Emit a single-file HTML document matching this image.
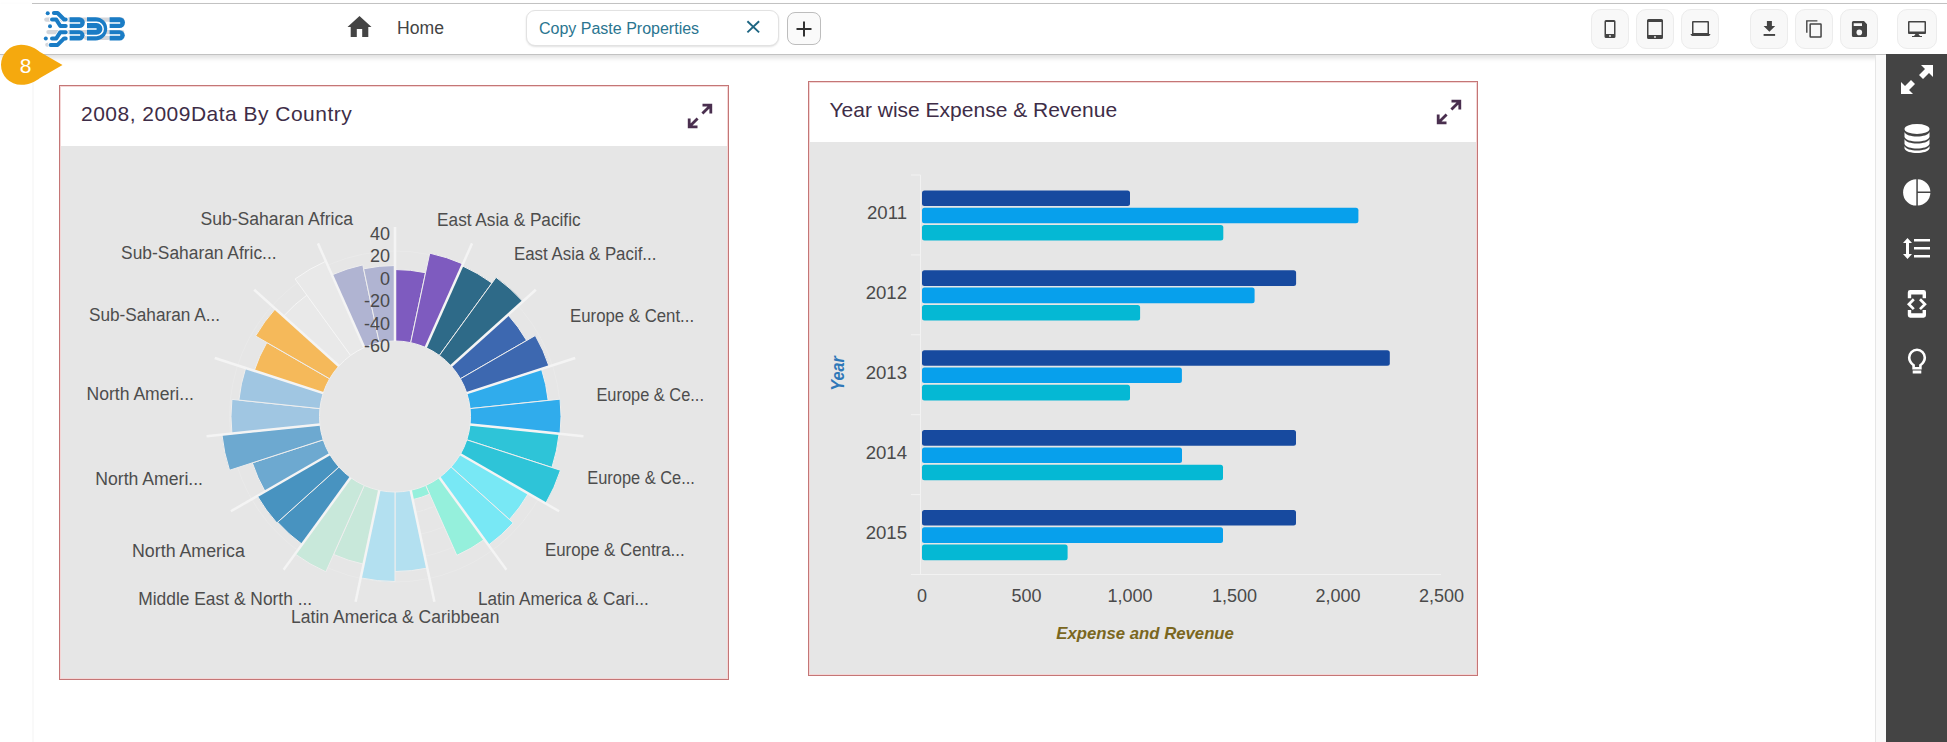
<!DOCTYPE html>
<html><head><meta charset="utf-8">
<style>
*{margin:0;padding:0;box-sizing:border-box}
html,body{width:1947px;height:742px;overflow:hidden;background:#fff;font-family:"Liberation Sans",sans-serif}
.abs{position:absolute}
#topline{left:32px;top:3px;width:1915px;height:1px;background:#c4c4c4}
#header{left:0;top:4px;width:1947px;height:51px;background:#fff;border-bottom:1px solid #c2c2c2;box-shadow:0 3px 5px rgba(0,0,0,0.13)}
#leftline{left:32px;top:55px;width:2px;height:700px;background:#f9f9f9}
#rstrip{left:1875px;top:55px;width:11px;height:700px;background:#fafafa;border-left:1px solid #e6e6e6}
#sidebar{left:1886px;top:54px;width:61px;height:700px;background:#444444}
.btn{top:9px;width:38px;height:40px;border-radius:10px;background:#f8f8f8;border:1px solid #ececec}
.btn svg{position:absolute}
.card{width:670px;height:595px;border:1px solid #c47676;background:#e6e6e6;box-shadow:inset 0 0 0 1px #f4d6d6}
.card .hd{position:absolute;left:1px;top:1px;width:666px;height:59px;background:#fff}
.ttl{position:absolute;color:#3e2d47;font-size:21px;white-space:nowrap}
svg text{font-family:"Liberation Sans",sans-serif}
.pl{font-size:17.6px;fill:#4d4d4d}
.ax{font-size:18px;fill:#4a4a4a}
.yl{font-size:18.6px;fill:#4a4a4a}
.xl{font-size:18px;fill:#4a4a4a}
.xt{font-size:16.7px;font-weight:bold;font-style:italic;fill:#7a6620}
.yt{font-size:17.5px;font-style:italic;font-weight:bold;fill:#2f78b8}
</style></head><body>
<div id="topline" class="abs"></div>
<div id="header" class="abs"></div>
<div id="leftline" class="abs"></div>
<div id="rstrip" class="abs"></div>
<div id="sidebar" class="abs"></div>

<!-- logo -->
<svg class="abs" style="left:40px;top:8px" width="90" height="42" viewBox="40 8 90 42">
 <g fill="#d3d6db">
  <rect x="44.2" y="17.4" width="80" height="4.4" rx="2.2"/>
  <rect x="46.3" y="30" width="78" height="4.2" rx="2.1"/>
  <rect x="84" y="35.8" width="26" height="4.2" rx="2"/>
  <rect x="45.2" y="42.7" width="8" height="4.1" rx="2"/>
 </g>
 <g fill="none" stroke-linecap="round" stroke-linejoin="round">
  <g stroke="#fff" stroke-width="5.6">
   <path d="M53.9,13H57.6L64.1,19.5H65.7"/>
  </g>
  <path d="M53.9,13H57.6L64.1,19.5H65.7" stroke="#1a7cc5" stroke-width="4"/>
  <path d="M52,19.6H56.3L60.3,26H65.7" stroke="#fff" stroke-width="5.6"/>
  <path d="M52,19.6H56.3L60.3,26H65.7" stroke="#1a7cc5" stroke-width="4"/>
  <path d="M65.7,32.2H60.3L56.3,38.4H52" stroke="#fff" stroke-width="5.6"/>
  <path d="M65.7,32.2H60.3L56.3,38.4H52" stroke="#1a7cc5" stroke-width="4"/>
  <path d="M65.7,38.4H64.1L57.6,44.9H50.6" stroke="#fff" stroke-width="5.6"/>
  <path d="M65.7,38.4H64.1L57.6,44.9H50.6" stroke="#1a7cc5" stroke-width="4"/>
 </g>
 <g fill="#1a7cc5">
  <circle cx="47.7" cy="13.3" r="2"/><circle cx="50" cy="26.3" r="2"/><circle cx="45.8" cy="38.4" r="2"/>
  <path d="M69.6,17.2H79.4A5.4,5.4 0 0 1 79.4,28H69.6Z"/>
  <path d="M69.6,30.2H79.4A5.15,5.15 0 0 1 79.4,40.5H69.6Z"/>
  <path d="M87,17.2H95.55A11.65,11.65 0 0 1 95.55,40.5H87Z"/>
  <path d="M109.6,17.2H119.6A5.4,5.4 0 0 1 119.6,28H109.6Z"/>
  <path d="M109.6,30.2H119.6A5.15,5.15 0 0 1 119.6,40.5H109.6Z"/>
 </g>
 <g fill="none" stroke="#fff" stroke-width="1.5">
  <path d="M69,22.9H80.2M69,35H80.2M109,22.9H120.2M109,35H120.2M86.5,28.9H96.6"/>
  <path d="M86.5,22.3H96.6A6.6,6.6 0 0 1 96.6,35.5H86.5"/>
 </g>
</svg>

<!-- home -->
<svg class="abs" style="left:346px;top:15px" width="27" height="23" viewBox="0 0 27 23">
 <path d="M13.5,1 L25.5,12 L22.3,12 L22.3,22 L16.2,22 L16.2,14 L10.8,14 L10.8,22 L4.7,22 L4.7,12 L1.5,12 Z" fill="#444"/>
</svg>
<div class="abs" style="left:397px;top:17.5px;font-size:17.6px;color:#444">Home</div>

<!-- tab -->
<div class="abs" style="left:526px;top:10px;width:253px;height:36px;border:1px solid #e2e2e2;border-radius:9px;background:#fff;box-shadow:0 1px 2px rgba(0,0,0,0.12)"></div>
<div class="abs" style="left:539px;top:19.5px;font-size:16px;color:#2a7590">Copy Paste Properties</div>
<svg class="abs" style="left:746px;top:20px" width="14" height="14" viewBox="0 0 14 14">
 <path d="M1.4,1.2L13.1,12.4M13.1,1.2L1.4,12.4" stroke="#1d6582" stroke-width="1.9"/>
</svg>
<div class="abs" style="left:787px;top:12px;width:34px;height:33px;border:1px solid #bdbdbd;border-radius:8px;background:#fafafa"></div>
<svg class="abs" style="left:795.5px;top:21px" width="16" height="16" viewBox="0 0 16 16">
 <path d="M0.5,8H15.5M8,0.5V15.5" stroke="#333" stroke-width="2"/>
</svg>

<!-- right buttons -->
<div class="abs btn" style="left:1591px"></div>
<div class="abs btn" style="left:1636px"></div>
<div class="abs btn" style="left:1681px"></div>
<div class="abs btn" style="left:1750px"></div>
<div class="abs btn" style="left:1795px"></div>
<div class="abs btn" style="left:1840px"></div>
<div class="abs btn" style="left:1897px;width:40px"></div>
<svg class="abs" style="left:0;top:0" width="1947" height="60" viewBox="0 0 1947 60">
 <g fill="#444">
  <!-- phone -->
  <path d="M1606,20h8a1.5,1.5 0 0 1 1.5,1.5v15a1.5,1.5 0 0 1 -1.5,1.5h-8a1.5,1.5 0 0 1 -1.5,-1.5v-15a1.5,1.5 0 0 1 1.5,-1.5zM1606,22v12h8v-12z"/>
  <circle cx="1610" cy="36" r="0.9" fill="#f8f8f8"/>
  <!-- tablet -->
  <path d="M1648.5,19h13a1.5,1.5 0 0 1 1.5,1.5v17a1.5,1.5 0 0 1 -1.5,1.5h-13a1.5,1.5 0 0 1 -1.5,-1.5v-17a1.5,1.5 0 0 1 1.5,-1.5zM1648.5,22v13h13v-13z"/>
  <circle cx="1655" cy="37" r="0.9" fill="#f8f8f8"/>
  <!-- laptop -->
  <path d="M1693,21h15a1,1 0 0 1 1,1v12h-17v-12a1,1 0 0 1 1,-1zM1693.5,22.5v10.5h14v-10.5z"/>
  <path d="M1690.3,34h20.3l-1.5,2h-17.3z"/>
  <!-- download -->
  <path d="M1766.9,20.9h5v5h3.3l-5.8,5.9l-5.8,-5.9h3.3z"/>
  <rect x="1763.6" y="34" width="11.5" height="1.9" />
  <!-- copy -->
  <path d="M1806.1,20.3h11.3v1.3h-9.9v11.1h-1.4z"/>
  <path d="M1810.6,23.2h10a1.2,1.2 0 0 1 1.2,1.2v12.1a1.2,1.2 0 0 1 -1.2,1.2h-10a1.2,1.2 0 0 1 -1.2,-1.2v-12.1a1.2,1.2 0 0 1 1.2,-1.2zM1810.9,24.7v11.5h9.4v-11.5z"/>
  <!-- save -->
  <path d="M1853.4,20.9h10.6l3,3.3v11.2a1.5,1.5 0 0 1 -1.5,1.5h-12.1a1.5,1.5 0 0 1 -1.5,-1.5v-13a1.5,1.5 0 0 1 1.5,-1.5zM1853.7,23.3v2.6h8.3v-2.6z"/>
  <circle cx="1859.3" cy="32.4" r="2.8" fill="#f8f8f8"/>
  <!-- desktop -->
  <path d="M1909,21h16a1,1 0 0 1 1,1v11a1,1 0 0 1 -1,1h-16a1,1 0 0 1 -1,-1v-11a1,1 0 0 1 1,-1zM1909.5,22.5v9h15v-9z"/>
  <path d="M1915.5,34h3l1.5,2h2v1h-10v-1h2z"/>
 </g>
</svg>

<!-- sidebar icons -->
<svg class="abs" style="left:1886px;top:54px" width="61" height="340" viewBox="1886 54 61 340">
 <g fill="#fff">
  <!-- expand -->
  <path d="M1921,65h12v12l-4,-4l-6,6l-4,-4l6,-6z"/>
  <path d="M1913,94h-12v-12l4,4l6,-6l4,4l-6,6z"/>
  <!-- database -->
  <ellipse cx="1917" cy="129" rx="12.5" ry="5"/>
  <path d="M1904.5,132c2,6 23,6 25,0v5c-2,6 -23,6 -25,0z"/>
  <path d="M1904.5,139c2,6 23,6 25,0v5c-2,6 -23,6 -25,0z"/>
  <path d="M1904.5,146c2,6 23,6 25,0v2.5c-2,6 -23,6 -25,0z"/>
  <!-- pie -->
  <path d="M1916.3,179.2A13.2,13.2 0 1 0 1916.3,205.6Z"/>
  <path d="M1917.8,179.2A13.2,13.2 0 0 1 1930.4,191.6H1917.8Z"/>
  <path d="M1917.8,193H1930.4A13.2,13.2 0 0 1 1917.8,205.6Z"/>
  <!-- line height -->
  <path d="M1907.5,238l4.5,5h-3v11h3l-4.5,5l-4.5,-5h3v-11h-3z"/>
  <rect x="1914" y="239" width="16" height="2.5"/>
  <rect x="1914" y="247" width="16" height="2.5"/>
  <rect x="1914" y="255" width="16" height="2.5"/>
  <!-- code -->
  <path d="M1907.8,298.2V292.5a2.4,2.4 0 0 1 2.4,-2.4H1923.6a2.4,2.4 0 0 1 2.4,2.4V298.2H1922.6V294.6H1911.2V298.2Z"/>
  <path d="M1907.8,309.9V315.3a2.4,2.4 0 0 0 2.4,2.4H1923.6a2.4,2.4 0 0 0 2.4,-2.4V309.9H1922.6V313.3H1911.2V309.9Z"/>
  <path d="M1913.8,299.3L1908.9,304.2L1913.8,309.1M1920,299.3L1924.9,304.2L1920,309.1" fill="none" stroke="#fff" stroke-width="2.7"/>
  <!-- bulb -->
  <path d="M1913.6,368.2V365.2C1911,363.4 1909.2,360.6 1909.2,357.6A7.8,7.8 0 0 1 1924.8,357.6C1924.8,360.6 1923,363.4 1920.4,365.2V368.2Z" fill="none" stroke="#fff" stroke-width="2.6"/>
  <rect x="1912.7" y="370.5" width="8.6" height="3"/>
 </g>
</svg>

<!-- badge -->
<svg class="abs" style="left:0;top:40px" width="70" height="50" viewBox="0 40 70 50">
 <path d="M21,44.8 C30,44.8 36,49 40,52 L62.5,65 L40,78 C36,81 30,84.8 21,84.8 A20,20 0 0 1 21,44.8Z" fill="#f5a90e"/>
 <text x="25.5" y="72.5" text-anchor="middle" font-size="21" fill="#fff" style="font-family:'Liberation Sans'">8</text>
</svg>

<!-- card 1 -->
<div class="abs card" style="left:59px;top:85px"><div class="hd"></div></div>
<div class="abs ttl" style="left:81px;top:102px;letter-spacing:0.48px">2008, 2009Data By Country</div>
<svg class="abs" style="left:686px;top:102px" width="28" height="28" viewBox="0 0 28 28">
 <g stroke="#4a2f4f" stroke-width="2.8" fill="none">
  <path d="M16.4,11.6L24.5,3.5M16.5,3.2H24.8V11.5"/>
  <path d="M11.6,16.4L3.5,24.5M3.2,16.5V24.8H11.5"/>
 </g>
</svg>

<!-- card 2 -->
<div class="abs card" style="left:808px;top:81px"><div class="hd"></div></div>
<div class="abs ttl" style="left:829.5px;top:98px">Year wise Expense &amp; Revenue</div>
<svg class="abs" style="left:1435px;top:98px" width="28" height="28" viewBox="0 0 28 28">
 <g stroke="#4a2f4f" stroke-width="2.8" fill="none">
  <path d="M16.4,11.6L24.5,3.5M16.5,3.2H24.8V11.5"/>
  <path d="M11.6,16.4L3.5,24.5M3.2,16.5V24.8H11.5"/>
 </g>
</svg>

<svg class="abs" style="left:0;top:0" width="1947" height="742" viewBox="0 0 1947 742">
<circle cx="395.0" cy="416.5" r="98" fill="none" stroke="#eaeaea" stroke-width="1"/>
<circle cx="395.0" cy="416.5" r="120.5" fill="none" stroke="#eaeaea" stroke-width="1"/>
<circle cx="395.0" cy="416.5" r="143" fill="none" stroke="#eaeaea" stroke-width="1"/>
<circle cx="395.0" cy="416.5" r="165.5" fill="none" stroke="#eaeaea" stroke-width="1"/>
<path d="M395.00,269.50A147,147 0 0 1 425.56,272.71L410.70,342.65A75.5,75.5 0 0 0 395.00,341.00Z" fill="#7e5bbf" stroke="#eeeeee" stroke-width="1"/>
<path d="M429.72,253.15A167,167 0 0 1 462.93,263.94L425.71,347.53A75.5,75.5 0 0 0 410.70,342.65Z" fill="#7e5bbf" stroke="#eeeeee" stroke-width="1"/>
<path d="M462.11,265.76A165,165 0 0 1 491.98,283.01L439.38,355.42A75.5,75.5 0 0 0 425.71,347.53Z" fill="#2e6a88" stroke="#eeeeee" stroke-width="1"/>
<path d="M496.10,277.35A172,172 0 0 1 522.82,301.41L451.11,365.98A75.5,75.5 0 0 0 439.38,355.42Z" fill="#2e6a88" stroke="#eeeeee" stroke-width="1"/>
<path d="M507.96,314.79A152,152 0 0 1 526.64,340.50L460.38,378.75A75.5,75.5 0 0 0 451.11,365.98Z" fill="#3d68b0" stroke="#eeeeee" stroke-width="1"/>
<path d="M535.30,335.50A162,162 0 0 1 549.07,366.44L466.80,393.17A75.5,75.5 0 0 0 460.38,378.75Z" fill="#3d68b0" stroke="#eeeeee" stroke-width="1"/>
<path d="M541.46,368.91A154,154 0 0 1 548.16,400.40L470.09,408.61A75.5,75.5 0 0 0 466.80,393.17Z" fill="#30acec" stroke="#eeeeee" stroke-width="1"/>
<path d="M560.09,399.15A166,166 0 0 1 560.09,433.85L470.09,424.39A75.5,75.5 0 0 0 470.09,408.61Z" fill="#30acec" stroke="#eeeeee" stroke-width="1"/>
<path d="M559.10,433.75A165,165 0 0 1 551.92,467.49L466.80,439.83A75.5,75.5 0 0 0 470.09,424.39Z" fill="#2ec4d8" stroke="#eeeeee" stroke-width="1"/>
<path d="M560.48,470.27A174,174 0 0 1 545.69,503.50L460.38,454.25A75.5,75.5 0 0 0 466.80,439.83Z" fill="#2ec4d8" stroke="#eeeeee" stroke-width="1"/>
<path d="M528.37,493.50A154,154 0 0 1 509.44,519.55L451.11,467.02A75.5,75.5 0 0 0 460.38,454.25Z" fill="#78e8f5" stroke="#eeeeee" stroke-width="1"/>
<path d="M513.16,522.89A159,159 0 0 1 488.46,545.13L439.38,477.58A75.5,75.5 0 0 0 451.11,467.02Z" fill="#78e8f5" stroke="#eeeeee" stroke-width="1"/>
<path d="M484.34,539.47A152,152 0 0 1 456.82,555.36L425.71,485.47A75.5,75.5 0 0 0 439.38,477.58Z" fill="#95f0dc" stroke="#eeeeee" stroke-width="1"/>
<path d="M429.57,494.15A85,85 0 0 1 412.67,499.64L410.70,490.35A75.5,75.5 0 0 0 425.71,485.47Z" fill="#95f0dc" stroke="#eeeeee" stroke-width="1"/>
<path d="M427.23,568.11A155,155 0 0 1 395.00,571.50L395.00,492.00A75.5,75.5 0 0 0 410.70,490.35Z" fill="#b3e0f0" stroke="#eeeeee" stroke-width="1"/>
<path d="M395.00,581.50A165,165 0 0 1 360.69,577.89L379.30,490.35A75.5,75.5 0 0 0 395.00,492.00Z" fill="#b3e0f0" stroke="#eeeeee" stroke-width="1"/>
<path d="M363.61,564.20A151,151 0 0 1 333.58,554.45L364.29,485.47A75.5,75.5 0 0 0 379.30,490.35Z" fill="#c8e8da" stroke="#eeeeee" stroke-width="1"/>
<path d="M325.85,571.80A170,170 0 0 1 295.08,554.03L350.62,477.58A75.5,75.5 0 0 0 364.29,485.47Z" fill="#c8e8da" stroke="#eeeeee" stroke-width="1"/>
<path d="M302.13,544.32A158,158 0 0 1 277.58,522.22L338.89,467.02A75.5,75.5 0 0 0 350.62,477.58Z" fill="#4893c0" stroke="#eeeeee" stroke-width="1"/>
<path d="M276.84,522.89A159,159 0 0 1 257.30,496.00L329.62,454.25A75.5,75.5 0 0 0 338.89,467.02Z" fill="#4893c0" stroke="#eeeeee" stroke-width="1"/>
<path d="M265.10,491.50A150,150 0 0 1 252.34,462.85L323.20,439.83A75.5,75.5 0 0 0 329.62,454.25Z" fill="#6da9d0" stroke="#eeeeee" stroke-width="1"/>
<path d="M229.52,470.27A174,174 0 0 1 221.95,434.69L319.91,424.39A75.5,75.5 0 0 0 323.20,439.83Z" fill="#6da9d0" stroke="#eeeeee" stroke-width="1"/>
<path d="M231.90,433.64A164,164 0 0 1 231.90,399.36L319.91,408.61A75.5,75.5 0 0 0 319.91,424.39Z" fill="#a0c6e2" stroke="#eeeeee" stroke-width="1"/>
<path d="M238.86,400.09A157,157 0 0 1 245.68,367.98L323.20,393.17A75.5,75.5 0 0 0 319.91,408.61Z" fill="#a0c6e2" stroke="#eeeeee" stroke-width="1"/>
<path d="M254.24,370.77A148,148 0 0 1 266.83,342.50L329.62,378.75A75.5,75.5 0 0 0 323.20,393.17Z" fill="#f5b95a" stroke="#eeeeee" stroke-width="1"/>
<path d="M255.57,336.00A161,161 0 0 1 275.35,308.77L338.89,365.98A75.5,75.5 0 0 0 329.62,378.75Z" fill="#f5b95a" stroke="#eeeeee" stroke-width="1"/>
<path d="M283.53,316.13A150,150 0 0 1 306.83,295.15L350.62,355.42A75.5,75.5 0 0 0 338.89,365.98Z" fill="#e9e9e9" stroke="#f6f6f6" stroke-width="1"/>
<path d="M295.08,278.97A170,170 0 0 1 325.85,261.20L364.29,347.53A75.5,75.5 0 0 0 350.62,355.42Z" fill="#e9e9e9" stroke="#f6f6f6" stroke-width="1"/>
<path d="M331.96,274.90A155,155 0 0 1 362.77,264.89L379.30,342.65A75.5,75.5 0 0 0 364.29,347.53Z" fill="#b0b4d2" stroke="#eeeeee" stroke-width="1"/>
<path d="M363.61,268.80A151,151 0 0 1 395.00,265.50L395.00,341.00A75.5,75.5 0 0 0 379.30,342.65Z" fill="#b0b4d2" stroke="#eeeeee" stroke-width="1"/>
<line x1="395.00" y1="341.00" x2="395.00" y2="227.00" stroke="#f4f4f4" stroke-width="2.5"/>
<line x1="425.71" y1="347.53" x2="472.08" y2="243.38" stroke="#f4f4f4" stroke-width="2.5"/>
<line x1="451.11" y1="365.98" x2="535.83" y2="289.70" stroke="#f4f4f4" stroke-width="2.5"/>
<line x1="466.80" y1="393.17" x2="575.23" y2="357.94" stroke="#f4f4f4" stroke-width="2.5"/>
<line x1="470.09" y1="424.39" x2="583.46" y2="436.31" stroke="#f4f4f4" stroke-width="2.5"/>
<line x1="460.38" y1="454.25" x2="559.11" y2="511.25" stroke="#f4f4f4" stroke-width="2.5"/>
<line x1="439.38" y1="477.58" x2="506.39" y2="569.81" stroke="#f4f4f4" stroke-width="2.5"/>
<line x1="410.70" y1="490.35" x2="434.40" y2="601.86" stroke="#f4f4f4" stroke-width="2.5"/>
<line x1="379.30" y1="490.35" x2="355.60" y2="601.86" stroke="#f4f4f4" stroke-width="2.5"/>
<line x1="350.62" y1="477.58" x2="283.61" y2="569.81" stroke="#f4f4f4" stroke-width="2.5"/>
<line x1="329.62" y1="454.25" x2="230.89" y2="511.25" stroke="#f4f4f4" stroke-width="2.5"/>
<line x1="319.91" y1="424.39" x2="206.54" y2="436.31" stroke="#f4f4f4" stroke-width="2.5"/>
<line x1="323.20" y1="393.17" x2="214.77" y2="357.94" stroke="#f4f4f4" stroke-width="2.5"/>
<line x1="338.89" y1="365.98" x2="254.17" y2="289.70" stroke="#f4f4f4" stroke-width="2.5"/>
<line x1="364.29" y1="347.53" x2="317.92" y2="243.38" stroke="#f4f4f4" stroke-width="2.5"/>
<text x="390" y="240.0" text-anchor="end" class="ax">40</text>
<text x="390" y="262.4" text-anchor="end" class="ax">20</text>
<text x="390" y="284.8" text-anchor="end" class="ax">0</text>
<text x="390" y="307.2" text-anchor="end" class="ax">-20</text>
<text x="390" y="329.6" text-anchor="end" class="ax">-40</text>
<text x="390" y="352.0" text-anchor="end" class="ax">-60</text>
<text x="437.1" y="225.7" class="pl" textLength="143.5" lengthAdjust="spacingAndGlyphs">East Asia &amp; Pacific</text>
<text x="514.0" y="259.6" class="pl" textLength="142.4" lengthAdjust="spacingAndGlyphs">East Asia &amp; Pacif...</text>
<text x="570.1" y="321.9" class="pl" textLength="124.0" lengthAdjust="spacingAndGlyphs">Europe &amp; Cent...</text>
<text x="596.4" y="400.6" class="pl" textLength="107.6" lengthAdjust="spacingAndGlyphs">Europe &amp; Ce...</text>
<text x="587.3" y="484.3" class="pl" textLength="107.6" lengthAdjust="spacingAndGlyphs">Europe &amp; Ce...</text>
<text x="545.0" y="556.0" class="pl" textLength="139.6" lengthAdjust="spacingAndGlyphs">Europe &amp; Centra...</text>
<text x="477.9" y="605.2" class="pl" textLength="170.9" lengthAdjust="spacingAndGlyphs">Latin America &amp; Cari...</text>
<text x="291.1" y="623.1" class="pl" textLength="208.3" lengthAdjust="spacingAndGlyphs">Latin America &amp; Caribbean</text>
<text x="138.2" y="604.9" class="pl" textLength="174.0" lengthAdjust="spacingAndGlyphs">Middle East &amp; North ...</text>
<text x="132.0" y="556.5" class="pl" textLength="112.8" lengthAdjust="spacingAndGlyphs">North America</text>
<text x="95.3" y="484.8" class="pl" textLength="107.7" lengthAdjust="spacingAndGlyphs">North Ameri...</text>
<text x="86.5" y="400.4" class="pl" textLength="107.4" lengthAdjust="spacingAndGlyphs">North Ameri...</text>
<text x="89.0" y="321.0" class="pl" textLength="131.0" lengthAdjust="spacingAndGlyphs">Sub-Saharan A...</text>
<text x="121.1" y="259.1" class="pl" textLength="155.5" lengthAdjust="spacingAndGlyphs">Sub-Saharan Afric...</text>
<text x="200.4" y="225.1" class="pl" textLength="152.6" lengthAdjust="spacingAndGlyphs">Sub-Saharan Africa</text>
<rect x="922" y="190.40" width="208.0" height="15.6" rx="2.5" fill="#174a9f"/>
<rect x="922" y="207.70" width="436.4" height="15.6" rx="2.5" fill="#07a0ec"/>
<rect x="922" y="225.00" width="301.3" height="15.6" rx="2.5" fill="#05b8d4"/>
<text x="907" y="219.2" text-anchor="end" class="yl">2011</text>
<rect x="922" y="270.30" width="374.1" height="15.6" rx="2.5" fill="#174a9f"/>
<rect x="922" y="287.60" width="332.6" height="15.6" rx="2.5" fill="#07a0ec"/>
<rect x="922" y="304.90" width="218.1" height="15.6" rx="2.5" fill="#05b8d4"/>
<text x="907" y="299.1" text-anchor="end" class="yl">2012</text>
<rect x="922" y="350.20" width="467.8" height="15.6" rx="2.5" fill="#174a9f"/>
<rect x="922" y="367.50" width="259.9" height="15.6" rx="2.5" fill="#07a0ec"/>
<rect x="922" y="384.80" width="208.0" height="15.6" rx="2.5" fill="#05b8d4"/>
<text x="907" y="379.0" text-anchor="end" class="yl">2013</text>
<rect x="922" y="430.10" width="374.0" height="15.6" rx="2.5" fill="#174a9f"/>
<rect x="922" y="447.40" width="260.0" height="15.6" rx="2.5" fill="#07a0ec"/>
<rect x="922" y="464.70" width="301.0" height="15.6" rx="2.5" fill="#05b8d4"/>
<text x="907" y="458.9" text-anchor="end" class="yl">2014</text>
<rect x="922" y="510.00" width="374.0" height="15.6" rx="2.5" fill="#174a9f"/>
<rect x="922" y="527.30" width="301.0" height="15.6" rx="2.5" fill="#07a0ec"/>
<rect x="922" y="544.60" width="145.6" height="15.6" rx="2.5" fill="#05b8d4"/>
<text x="907" y="538.8" text-anchor="end" class="yl">2015</text>
<line x1="911" y1="175.00" x2="920.5" y2="175.00" stroke="#f2f2f2" stroke-width="1"/>
<line x1="911" y1="254.90" x2="920.5" y2="254.90" stroke="#f2f2f2" stroke-width="1"/>
<line x1="911" y1="334.80" x2="920.5" y2="334.80" stroke="#f2f2f2" stroke-width="1"/>
<line x1="911" y1="414.70" x2="920.5" y2="414.70" stroke="#f2f2f2" stroke-width="1"/>
<line x1="911" y1="494.60" x2="920.5" y2="494.60" stroke="#f2f2f2" stroke-width="1"/>
<line x1="911" y1="574.50" x2="920.5" y2="574.50" stroke="#f2f2f2" stroke-width="1"/>
<line x1="920.5" y1="175.0" x2="920.5" y2="574.5" stroke="#f2f2f2" stroke-width="1"/>
<line x1="911" y1="574.5" x2="1441" y2="574.5" stroke="#f2f2f2" stroke-width="1"/>
<text x="922" y="601.6" text-anchor="middle" class="xl">0</text>
<text x="1026.4" y="601.6" text-anchor="middle" class="xl">500</text>
<text x="1130" y="601.6" text-anchor="middle" class="xl">1,000</text>
<text x="1234.4" y="601.6" text-anchor="middle" class="xl">1,500</text>
<text x="1338" y="601.6" text-anchor="middle" class="xl">2,000</text>
<text x="1441.6" y="601.6" text-anchor="middle" class="xl">2,500</text>
<text x="1056.3" y="638.9" class="xt" textLength="177.6" lengthAdjust="spacingAndGlyphs">Expense and Revenue</text>
<text transform="translate(844.3,390.8) rotate(-90)" class="yt" textLength="34.5" lengthAdjust="spacingAndGlyphs">Year</text>
</svg>
</body></html>
